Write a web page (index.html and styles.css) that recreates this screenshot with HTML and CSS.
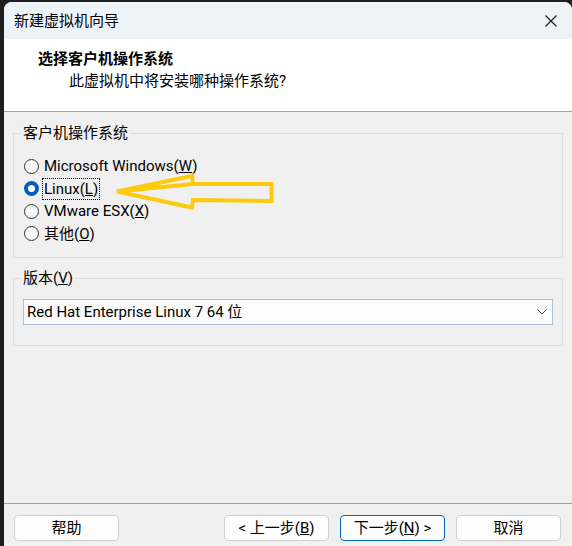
FILE: index.html
```html
<!DOCTYPE html>
<html lang="zh-CN">
<head>
<meta charset="utf-8">
<title>新建虚拟机向导</title>
<link rel="stylesheet" href="styles.css">
</head>
<body>
<div class="window">
  <div class="titlebar">
    <span class="title">新建虚拟机向导</span>
    <svg class="close" width="12" height="12" viewBox="0 0 12 12"><path d="M0.5 0.5 L11.5 11.5 M11.5 0.5 L0.5 11.5" stroke="#1a1a1a" stroke-width="1.1" fill="none"/></svg>
  </div>
  <div class="header">
    <div class="h-title">选择客户机操作系统</div>
    <div class="h-sub">此虚拟机中将安装哪种操作系统?</div>
  </div>
  <div class="content">
    <fieldset class="group g1">
      <legend>客户机操作系统</legend>
      <div class="radio"><span class="dot"></span><span class="txt">Microsoft Windows(<u>W</u>)</span></div>
      <div class="radio"><span class="dot checked"></span><span class="txt focus">Linux(<u>L</u>)</span></div>
      <div class="radio"><span class="dot"></span><span class="txt">VMware ESX(<u>X</u>)</span></div>
      <div class="radio"><span class="dot"></span><span class="txt">其他(<u>O</u>)</span></div>
    </fieldset>
    <fieldset class="group g2">
      <legend>版本(<u>V</u>)</legend>
      <div class="select">
        <span class="sel-text">Red Hat Enterprise Linux 7 64 位</span>
        <svg class="chev" width="10" height="6" viewBox="0 0 10 6"><path d="M0.5 0.5 L5 5 L9.5 0.5" stroke="#5a5a5a" stroke-width="1" fill="none"/></svg>
      </div>
    </fieldset>
  </div>
  <div class="footer">
    <button class="btn">帮助</button>
    <div class="spacer"></div>
    <button class="btn">&lt; 上一步(<u>B</u>)</button>
    <button class="btn default">下一步(<u>N</u>) &gt;</button>
    <button class="btn">取消</button>
  </div>
  <svg class="arrow" width="166" height="42" viewBox="0 0 166 42">
    <path d="M3 19.5 L78 4 L79 12 L157.5 12 L157.5 29 L79 28 L78 35.5 Z M3 19.5 L79 12" stroke="#ffc90e" stroke-width="4" fill="none" stroke-linejoin="miter"/>
  </svg>
</div>
</body>
</html>
```

FILE: styles.css
```css
* { box-sizing: border-box; }
html, body {
  margin: 0;
  padding: 0;
  width: 572px;
  height: 546px;
  overflow: hidden;
  background: #1e1e1e;
}
body {
  padding: 2px 0 0 4px;
  font-family: "Roboto", "Noto Sans CJK SC", sans-serif;
  font-size: 15px;
  color: #000;
}
.window {
  position: relative;
  width: 568px;
  height: 560px;
  border-radius: 8px 8px 0 0;
  overflow: hidden;
  background: #f0f0f0;
}
.titlebar {
  height: 37px;
  background: #eef3f8;
  display: flex;
  align-items: center;
  padding-left: 10px;
  padding-right: 15px;
}
.title {
  flex: 1;
  font-size: 15px;
  line-height: 20px;
}
.close { display: block; }
.header {
  height: 73px;
  background: #fff;
  border-bottom: 1px solid #a0a0a0;
  padding-top: 10px;
}
.h-title {
  padding-left: 34px;
  font-weight: 700;
  line-height: 20px;
  height: 20px;
}
.h-sub {
  margin-top: 2px;
  padding-left: 65px;
  line-height: 20px;
}
.content {
  height: 391px;
  padding-top: 11px;
}
.group {
  margin: 0 9px;
  border: 1px solid #dcdcdc;
  padding: 0;
  min-width: 0;
}
.group legend {
  padding: 0 2px;
  line-height: 20px;
  height: 20px;
}
.g1 { padding: 12px 10px 12px 10px; }
.g1 legend { margin-left: -3px; }
.radio {
  display: flex;
  align-items: center;
  height: 22.5px;
}
.dot {
  width: 15px;
  height: 15px;
  border-radius: 50%;
  border: 1px solid #333;
  background: #f8f8f8;
  margin-right: 4px;
  flex: none;
}
.dot.checked {
  border: 4px solid #005fb8;
  background: #fff;
}
.txt { line-height: 20px; padding: 0 1px; }
.txt.focus { outline: 1px dotted #000; outline-offset: 0; }
.g2 {
  margin-top: 10px;
  padding: 11px 9px 20px 9px;
}
.g2 legend { margin-left: -2px; }
.select {
  height: 26px;
  background: #fcfcfc;
  border: 1px solid #a9bfd4;
  display: flex;
  align-items: center;
  padding: 0 5px 0 3px;
}
.sel-text { flex: 1; line-height: 20px; }
.chev { display: block; }
.footer {
  border-top: 1px solid #a0a0a0;
  padding: 11px 11px 0 10px;
  display: flex;
  gap: 11px;
}
.spacer { flex: 1; }
.btn {
  width: 105px;
  height: 26px;
  background: #fdfdfd;
  border: 1px solid #d0d0d0;
  border-radius: 4px;
  font-family: inherit;
  font-size: 15px;
  line-height: 20px;
  color: #000;
  padding: 0;
}
.btn.default { border-color: #0067c0; }
.arrow {
  position: absolute;
  left: 110px;
  top: 170px;
}
```
